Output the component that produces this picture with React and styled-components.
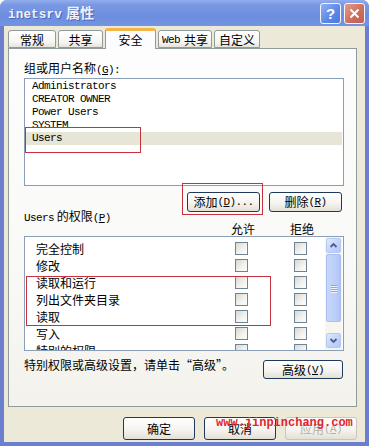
import React from 'react';
import styled, { createGlobalStyle } from 'styled-components';

const GlobalStyle = createGlobalStyle`
  html, body {
    margin: 0;
    padding: 0;
    background: #ffffff;
  }
  body {
    font-family: "Noto Sans CJK SC", "Noto Sans", sans-serif;
    font-size: 12px;
    color: #000;
  }
`;

const Window = styled.div`
  position: relative;
  width: 369px;
  height: 446px;
  display: flex;
  flex-direction: column;
  background: #6c7fcf;
  border-radius: 7px 7px 0 0;
  overflow: hidden;
`;

const TitleBar = styled.div`
  height: 26px;
  flex: none;
  display: flex;
  align-items: center;
  padding: 0 4px 0 8px;
  background: linear-gradient(#93aeec 0%, #7a99e3 18%, #6d8edf 60%, #7394e1 100%);
`;

const TitleText = styled.div`
  flex: 1;
  color: #eef1fb;
  font-weight: bold;
  font-size: 14px;
  line-height: 16px;
  text-shadow: 1px 1px 0 #4c66b8;
`;

const TitleLatin = styled.span`
  font-family: "Liberation Mono", monospace;
  font-size: 12.5px;
  letter-spacing: 0.2px;
  margin-right: 4px;
`;

const CaptionButton = styled.div`
  width: 21px;
  height: 21px;
  box-sizing: border-box;
  margin-left: 3px;
  border: 1px solid #f4f6fc;
  border-radius: 3px;
  display: flex;
  align-items: center;
  justify-content: center;
  color: #fff;
  font: bold 15px "Liberation Sans", sans-serif;
  background: ${p => (p.$close
    ? 'linear-gradient(135deg, #e59a88, #cc6c5a 60%, #c45e4d)'
    : 'linear-gradient(135deg, #8fb0f4, #5a86e6 60%, #4d79de)')};
`;

const Body = styled.div`
  flex: 1;
  margin: 0 4px 4px 4px;
  padding: 2px 8px 0 4px;
  background: #ece9d8;
  display: flex;
  flex-direction: column;
`;

const TabRow = styled.div`
  display: flex;
  align-items: flex-end;
  height: 20px;
  position: relative;
  z-index: 1;
`;

const Tab = styled.div`
  box-sizing: border-box;
  width: ${p => p.$w}px;
  height: ${p => (p.$active ? 21 : 18)}px;
  margin: ${p => (p.$active ? '0 0 -1px 0' : '0')};
  margin-right: 2px;
  display: flex;
  align-items: center;
  justify-content: center;
  border: 1px solid #919b9c;
  border-bottom: ${p => (p.$active ? 'none' : '1px solid #919b9c')};
  border-top: ${p => (p.$active ? '3px solid #f2b54a' : '1px solid #919b9c')};
  border-radius: 3px 3px 0 0;
  background: ${p => (p.$active
    ? '#fcfcfe'
    : 'linear-gradient(#ffffff, #f6f5f1 70%, #e5e3da)')};
  line-height: 14px;
  padding-top: ${p => (p.$active ? 0 : 1)}px;
  white-space: nowrap;
`;

const Panel = styled.div`
  box-sizing: border-box;
  height: 359px;
  border: 1px solid #919b9c;
  background: linear-gradient(#fdfdfd, #f9f9f7 60%, #f3f2ec);
  padding: 12px 12px 0 15px;
  display: flex;
  flex-direction: column;
`;

const Label = styled.div`
  height: 14px;
  line-height: 14px;
  white-space: nowrap;
`;

const Latin = styled.span`
  font-family: "Liberation Mono", monospace;
  font-size: 11px;
  letter-spacing: -0.6px;
`;

const ListBox = styled.div`
  box-sizing: border-box;
  margin-top: 3px;
  height: 108px;
  border: 1px solid #8a9eb8;
  background: #ffffff;
  padding: 1px;
`;

const ListItem = styled.div`
  height: 13px;
  line-height: 13px;
  padding-left: 6px;
  font-family: "Liberation Mono", monospace;
  font-size: 11px;
  letter-spacing: -0.6px;
  background: ${p => (p.$selected ? '#e7e5d6' : 'transparent')};
`;

const ButtonRow = styled.div`
  display: flex;
  justify-content: flex-end;
  gap: 9px;
  margin-top: 6px;
  padding-right: 2px;
`;

const Button = styled.div`
  box-sizing: border-box;
  width: ${p => p.$w || 73}px;
  height: ${p => p.$h || 20}px;
  border: 1px solid ${p => (p.$disabled ? '#c9c7ba' : '#20395a')};
  border-radius: 3px;
  background: linear-gradient(#ffffff, #f5f4f0 55%, #e3e0d6);
  color: ${p => (p.$disabled ? '#b5b2a5' : '#000')};
  display: flex;
  align-items: center;
  justify-content: center;
  line-height: 14px;
  white-space: nowrap;
`;

const PermLabel = styled.div`
  margin-top: -3px;
  height: 13px;
  line-height: 13px;
  white-space: nowrap;
`;

const ColumnHeads = styled.div`
  display: grid;
  grid-template-columns: 1fr 30px 30px;
  column-gap: 29px;
  padding-right: 27px;
  height: 13px;
  line-height: 13px;
  text-align: center;
`;

const PermList = styled.div`
  box-sizing: border-box;
  margin-top: 1px;
  height: 115px;
  border: 1px solid #8a9eb8;
  background: #ffffff;
  display: flex;
  overflow: hidden;
`;

const PermRows = styled.div`
  width: 300px;
  padding-top: 3px;
  overflow: hidden;
`;

const PermRow = styled.div`
  display: grid;
  grid-template-columns: 1fr 13px 13px;
  column-gap: 46px;
  align-items: center;
  height: 17px;
  padding: 0 18px 0 11px;
  line-height: 14px;
`;

const Check = styled.div`
  box-sizing: border-box;
  width: 13px;
  height: 13px;
  border: 1px solid #6f8296;
  background: linear-gradient(135deg, #d9d9d3, #f3f3ef 60%, #fdfdfc);
`;

const ScrollBar = styled.div`
  width: 17px;
  flex: none;
  box-sizing: border-box;
  padding: 1px 1px 2px 1px;
  display: flex;
  flex-direction: column;
  gap: 1px;
  background: #f6f5f0;
`;

const ScrollBtn = styled.div`
  box-sizing: border-box;
  height: 15px;
  border: 1px solid #b6c9f3;
  border-radius: 2px;
  background: linear-gradient(135deg, #e0e9fd, #c1d2f9 60%, #b3c7f5);
  display: flex;
  align-items: center;
  justify-content: center;
`;

const Thumb = styled.div`
  box-sizing: border-box;
  height: 68px;
  border: 1px solid #a9bff0;
  border-radius: 2px;
  background: linear-gradient(90deg, #c8d7fb, #bccefa 60%, #b0c4f5);
  display: flex;
  flex-direction: column;
  align-items: center;
  justify-content: center;
  gap: 1px;
`;

const Grip = styled.div`
  width: 6px;
  height: 1px;
  background: #8ea6e0;
  box-shadow: 0 1px 0 #eef3ff;
`;

const Track = styled.div`
  flex: 1;
`;

const AdvRow = styled.div`
  display: flex;
  align-items: flex-start;
  justify-content: space-between;
  margin-top: 9px;
  padding-right: 1px;
`;

const AdvText = styled.div`
  margin-top: -2px;
  height: 14px;
  line-height: 14px;
`;

const BottomRow = styled.div`
  display: flex;
  justify-content: flex-end;
  gap: 9px;
  margin-top: 10px;
`;

const Annotation = styled.div`
  position: absolute;
  box-sizing: border-box;
  border: 1.5px solid #c8323f;
  pointer-events: none;
`;

const Watermark = styled.div`
  position: absolute;
  left: 216px;
  top: 415px;
  color: #e3262e;
  font-family: "Liberation Mono", monospace;
  font-weight: bold;
  font-size: 12px;
  line-height: 16px;
`;

const Chevron = ({ down }) => (
  <svg width="9" height="7" viewBox="0 0 9 7">
    <path
      d={down ? 'M1.5 2 L4.5 5 L7.5 2' : 'M1.5 5 L4.5 2 L7.5 5'}
      fill="none"
      stroke="#4a5f8f"
      strokeWidth="1.8"
    />
  </svg>
);

const CloseGlyph = () => (
  <svg width="11" height="11" viewBox="0 0 11 11">
    <path d="M1.5 1.5 L9.5 9.5 M9.5 1.5 L1.5 9.5" stroke="#fff" strokeWidth="2" />
  </svg>
);

const users = ['Administrators', 'CREATOR OWNER', 'Power Users', 'SYSTEM', 'Users'];
const perms = ['完全控制', '修改', '读取和运行', '列出文件夹目录', '读取', '写入', '特别的权限'];

const tabs = [
  { key: 'general', w: 48, label: '常规' },
  { key: 'share', w: 45, label: '共享' },
  { key: 'security', w: 51, label: '安全', active: true },
  { key: 'web', w: 54, label: <><Latin style={{ marginRight: 4 }}>Web</Latin>共享</> },
  { key: 'custom', w: 46, label: '自定义' },
];

export default function App() {
  return (
    <>
      <GlobalStyle />
      <Window>
        <TitleBar>
          <TitleText>
            <TitleLatin>inetsrv</TitleLatin>属性
          </TitleText>
          <CaptionButton>?</CaptionButton>
          <CaptionButton $close><CloseGlyph /></CaptionButton>
        </TitleBar>
        <Body>
          <TabRow>
            {tabs.map(t => (
              <Tab key={t.key} $w={t.w} $active={t.active}>{t.label}</Tab>
            ))}
          </TabRow>
          <Panel>
            <Label>组或用户名称<Latin>(<u>G</u>):</Latin></Label>
            <ListBox>
              {users.map(u => (
                <ListItem key={u} $selected={u === 'Users'}>{u}</ListItem>
              ))}
            </ListBox>
            <ButtonRow>
              <Button>添加<Latin>(<u>D</u>)...</Latin></Button>
              <Button>删除<Latin>(<u>R</u>)</Latin></Button>
            </ButtonRow>
            <PermLabel><Latin>Users</Latin> 的权限<Latin>(<u>P</u>)</Latin></PermLabel>
            <ColumnHeads>
              <span />
              <span>允许</span>
              <span>拒绝</span>
            </ColumnHeads>
            <PermList>
              <PermRows>
                {perms.map(p => (
                  <PermRow key={p}>
                    <span>{p}</span>
                    <Check />
                    <Check />
                  </PermRow>
                ))}
              </PermRows>
              <ScrollBar>
                <ScrollBtn><Chevron /></ScrollBtn>
                <Thumb>
                  <Grip />
                  <Grip />
                  <Grip />
                  <Grip />
                </Thumb>
                <Track />
                <ScrollBtn><Chevron down /></ScrollBtn>
              </ScrollBar>
            </PermList>
            <AdvRow>
              <AdvText>特别权限或高级设置，请单击“高级”。</AdvText>
              <Button $w={80} $h={19}>高级<Latin>(<u>V</u>)</Latin></Button>
            </AdvRow>
          </Panel>
          <BottomRow>
            <Button $w={72} $h={23}>确定</Button>
            <Button $w={72} $h={23}>取消</Button>
            <Button $w={72} $h={23} $disabled>应用<Latin>(<u>A</u>)</Latin></Button>
          </BottomRow>
        </Body>
        <Annotation style={{ left: 25, top: 127, width: 116, height: 26 }} />
        <Annotation style={{ left: 182, top: 183, width: 81, height: 32 }} />
        <Annotation style={{ left: 26, top: 276, width: 245, height: 50 }} />
        <Watermark>www.jinpinchang.com</Watermark>
      </Window>
    </>
  );
}
